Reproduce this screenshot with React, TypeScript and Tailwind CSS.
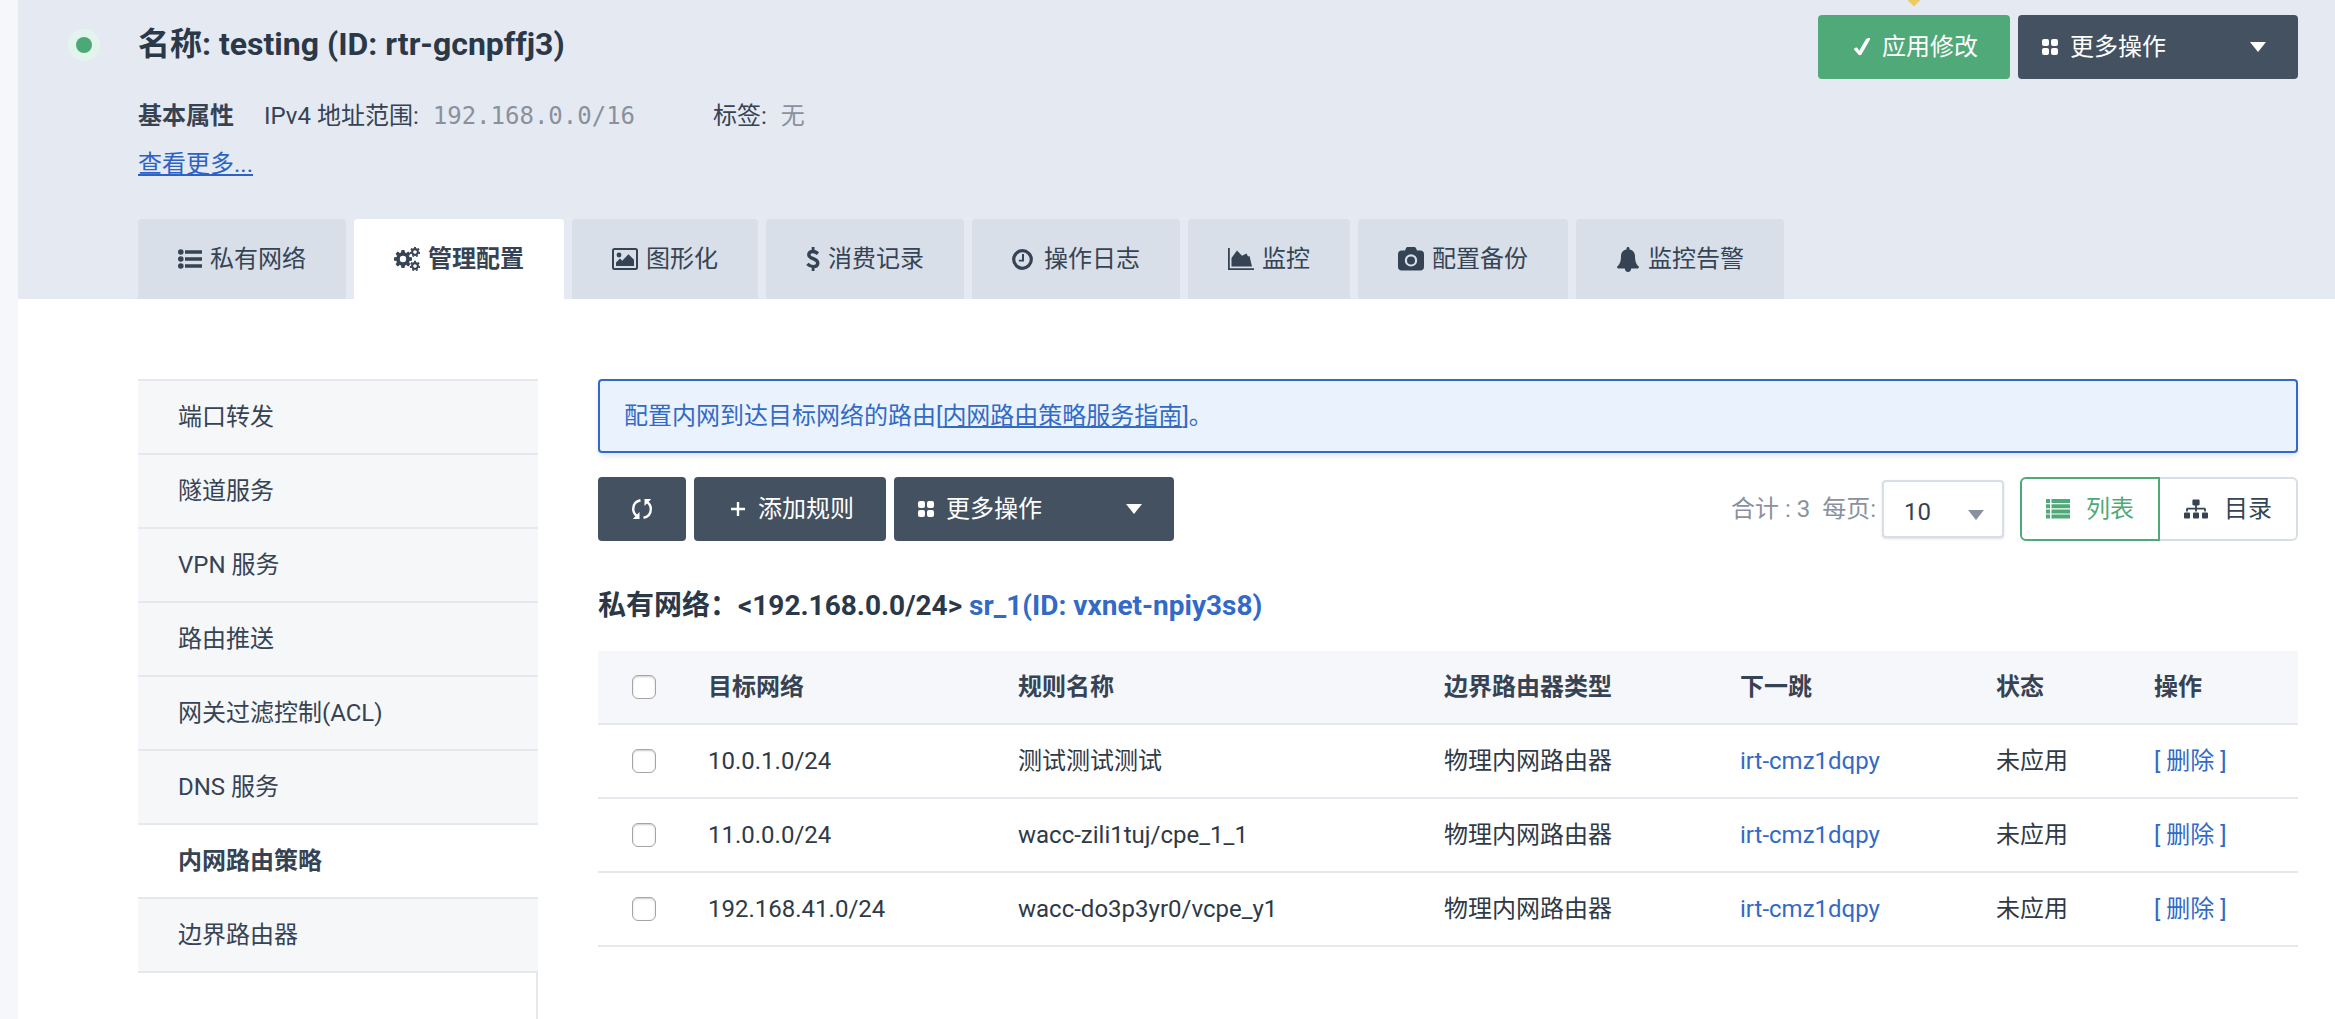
import type { ReactNode } from "react";
import { FaSitemap } from "react-icons/fa";

const icon = "shrink-0 fill-current";

function ListIcon() {
  return (
    <svg className={`${icon} h-5 w-6`} viewBox="0 0 24 20">
      <circle cx="2.8" cy="3" r="2.8" />
      <circle cx="2.8" cy="10" r="2.8" />
      <circle cx="2.8" cy="17" r="2.8" />
      <path d="M7 1.200h17v3.600H7zM7 8.200h17v3.600H7zM7 15.200h17v3.600H7z" />
    </svg>
  );
}

type GearProps = { cx: number; cy: number; r: number; hole: number; teeth: number };

function Gear({ cx, cy, r, hole, teeth }: GearProps) {
  return (
    <g transform={`translate(${cx} ${cy})`}>
      <circle r={(r * 0.75 + hole) / 2} fill="none" stroke="currentColor" strokeWidth={r * 0.75 - hole} />
      {Array.from({ length: teeth }, (_, i) => (
        <path
          key={i}
          transform={`rotate(${(360 / teeth) * i})`}
          d={`M${-r * 0.24} ${-r * 0.68}L${-r * 0.16} ${-r}H${r * 0.16}L${r * 0.24} ${-r * 0.68}z`}
        />
      ))}
    </g>
  );
}

function CogsIcon() {
  return (
    <svg className={`${icon} h-6 w-[26px]`} viewBox="0 0 26 24">
      <Gear cx={9} cy={12} r={9} hole={3.2} teeth={8} />
      <Gear cx={21} cy={5} r={5.2} hole={1.8} teeth={7} />
      <Gear cx={21} cy={19} r={5.2} hole={1.8} teeth={7} />
    </svg>
  );
}

function ImageIcon() {
  return (
    <svg className={`${icon} h-[22px] w-[26px]`} viewBox="0 0 26 22">
      <rect x="1" y="1" width="24" height="20" rx="1.5" fill="none" stroke="currentColor" strokeWidth="2" />
      <circle cx="7" cy="7" r="2.4" />
      <path d="M4 18v-3.500l4-4 2.200 2.200 6.300-6.400 5.500 5.500V18z" />
    </svg>
  );
}

function DollarIcon() {
  return (
    <svg className={`${icon} h-6 w-[14px]`} viewBox="0 0 14 24">
      <path
        fill="none"
        stroke="currentColor"
        strokeWidth="3.400"
        d="M12 6.600C10 5 8.500 4.500 6.700 4.500 4.300 4.500 2.800 5.800 2.800 7.700c0 4.600 9 3.300 9 8.300 0 2.200-1.800 3.600-4.400 3.600-2.400 0-4.300-1-6-2.700"
      />
      <path d="M5.700 0h2.800v4H5.700zM5.700 20h2.800v4H5.700z" />
    </svg>
  );
}

function ClockIcon() {
  return (
    <svg className={`${icon} h-[21px] w-6`} viewBox="0 0 24 21">
      <circle cx="10.500" cy="10.500" r="8.800" fill="none" stroke="currentColor" strokeWidth="3.200" />
      <path d="M10 5h2v7.500H6.800v-1.800H10z" />
    </svg>
  );
}

function AreaIcon() {
  return (
    <svg className={`${icon} h-[22px] w-[26px]`} viewBox="0 0 26 22">
      <path d="M0 0h1.800v20.200H26V22H0z" />
      <path d="M3.500 18.500V10L9 2.500l5 5.200 4.500-2.200 1.500 3 1.500-.5 2.500 10.500z" />
    </svg>
  );
}

function CameraIcon() {
  return (
    <svg className={`${icon} h-6 w-[26px]`} viewBox="0 0 26 24">
      <path
        fillRule="evenodd"
        d="M3.500 3.500H7L8 1.200C8.300.4 9 0 10 0h6c1 0 1.700.4 2 1.200l1 2.300h3.500C24.500 3.500 26 5 26 7v13c0 2-1.500 3.500-3.500 3.500h-19C1.500 23.500 0 22 0 20V7c0-2 1.500-3.500 3.500-3.500zM13 7.200a6.200 6.200 0 100 12.400 6.200 6.200 0 000-12.400z"
      />
      <circle cx="13" cy="13.400" r="4" />
    </svg>
  );
}

function BellIcon() {
  return (
    <svg className={`${icon} h-[25px] w-6`} viewBox="-1 0 24 25">
      <path d="M11 0c.9 0 1.500.7 1.500 1.500V2.400C16 3 18 5.800 18 9c0 6 1.500 8.500 4 10.800 0 1-.8 1.800-1.700 1.800H14.200C14.200 23.500 12.800 25 11 25s-3.200-1.500-3.200-3.400H1.700C.8 21.600 0 20.800 0 19.800 2.500 17.500 4 15 4 9c0-3.200 2-6 5.500-6.600v-.9C9.500.7 10.100 0 11 0z" />
    </svg>
  );
}

function CheckIcon() {
  return (
    <svg className={`${icon} h-[18px] w-4`} viewBox="0 0 16 18">
      <path d="M0 11.500c0-2.200 3-3 4-.8l1.200 2L11.800 1.500C12.800 0 14 0 16 0v1.500L7.600 16.200c-.8 1.400-2.600 1.400-3.400 0z" />
    </svg>
  );
}

function PlusIcon() {
  return (
    <svg className={`${icon} size-4`} viewBox="0 0 16 16">
      <path d="M6.800 1h2.400v5.800H15v2.400H9.200V15H6.800V9.200H1V6.800h5.800z" />
    </svg>
  );
}

function GridIcon() {
  return (
    <svg className={`${icon} size-4`} viewBox="0 0 16 16">
      <rect width="7" height="7" rx="2" />
      <rect x="9" width="7" height="7" rx="2" />
      <rect y="9" width="7" height="7" rx="2" />
      <rect x="9" y="9" width="7" height="7" rx="2" />
    </svg>
  );
}

function RefreshIcon() {
  return (
    <svg className={`${icon} h-5 w-[22px]`} viewBox="0 0 22 20">
      <path fill="none" stroke="currentColor" strokeWidth="2.400" d="M9.500 1.200C4.500 2.200 2.200 6 2.200 10c0 3 1.300 5.300 3.600 7M12.500 18.800C17.500 17.800 19.800 14 19.800 10c0-3-1.300-5.300-3.600-7" />
      <path d="M8.500 13V20H1.800zM13.500 7V0h6.700z" />
    </svg>
  );
}

function RowsIcon() {
  return (
    <svg className={`${icon} h-5 w-6`} viewBox="0 0 24 20">
      <path d="M0 0h4v4H0zM5.500 0H24v4H5.500zM0 5.200h4v4H0zM5.500 5.200H24v4H5.500zM0 10.400h4v4H0zM5.500 10.400H24v4H5.500zM0 15.600h4v4H0zM5.500 15.600H24v4H5.500z" />
    </svg>
  );
}

function Caret() {
  return (
    <svg className={`${icon} h-[10px] w-4`} viewBox="0 0 16 10">
      <path d="M0 0h16L8 10z" />
    </svg>
  );
}

function MoreButton() {
  return (
    <button className="flex h-16 w-[280px] items-center rounded bg-[#445161] pl-6 pr-8 text-white">
      <GridIcon />
      <span className="ml-3 flex-1 text-left">更多操作</span>
      <Caret />
    </button>
  );
}

const tabs: { label: string; icon: ReactNode; active?: boolean }[] = [
  { label: "私有网络", icon: <ListIcon /> },
  { label: "管理配置", icon: <CogsIcon />, active: true },
  { label: "图形化", icon: <ImageIcon /> },
  { label: "消费记录", icon: <DollarIcon /> },
  { label: "操作日志", icon: <ClockIcon /> },
  { label: "监控", icon: <AreaIcon /> },
  { label: "配置备份", icon: <CameraIcon /> },
  { label: "监控告警", icon: <BellIcon /> },
];

const menu = ["端口转发", "隧道服务", "VPN 服务", "路由推送", "网关过滤控制(ACL)", "DNS 服务", "内网路由策略", "边界路由器"];

const rules = [
  { network: "10.0.1.0/24", name: "测试测试测试" },
  { network: "11.0.0.0/24", name: "wacc-zili1tuj/cpe_1_1" },
  { network: "192.168.41.0/24", name: "wacc-do3p3yr0/vcpe_y1" },
];

const checkbox = "block size-6 appearance-none rounded-md border border-[#a5a5a5] bg-white shadow-[inset_0_1px_2px_#cccccc]";

export default function App() {
  return (
    <div className="flex min-h-screen bg-[#f5f7fa] pl-[18px] font-[Roboto,'Noto_Sans_CJK_SC',sans-serif] text-2xl leading-9 text-[#364354]">
      <div className="flex min-w-0 flex-1 flex-col bg-white">
        <header className="relative bg-[#e5eaf2] pl-[120px] pr-[37px]">
          <div className="absolute -top-2 right-[415px] size-3 rotate-45 bg-[#eccb62]" />
          <div className="flex h-[219px] justify-between">
            <div className="relative">
              <span className="absolute -left-[70px] top-[29px] flex size-8 items-center justify-center rounded-full bg-[#e3f4ec]">
                <span className="size-4 rounded-full bg-[#4ca877]" />
              </span>
              <h1 className="pt-6 text-[32px] font-bold leading-10 text-[#2b3847]">名称: testing (ID: rtr-gcnpffj3)</h1>
              <div className="mt-[34px] flex">
                <strong className="mr-[30px]">基本属性</strong>
                <span className="mr-[14px]">IPv4 地址范围:</span>
                <span className="mr-[78px] font-['DejaVu_Sans_Mono',monospace] text-[#8a919e]">192.168.0.0/16</span>
                <span className="mr-[14px]">标签:</span>
                <span className="text-[#8a919e]">无</span>
              </div>
              <a href="#more" className="mt-3 inline-block text-[#2b62c4] underline">查看更多...</a>
            </div>
            <div className="flex gap-2 pt-[15px]">
              <button className="flex h-16 w-48 items-center gap-3 rounded bg-[#4fa979] pl-9 text-white">
                <CheckIcon />
                应用修改
              </button>
              <MoreButton />
            </div>
          </div>
          <nav className="flex gap-2">
            {tabs.map((tab) => (
              <a
                key={tab.label}
                href="#tab"
                className={`flex h-20 items-center gap-2 rounded-t px-10 ${tab.active ? "bg-white font-bold" : "bg-[#d8dfe8]"}`}
              >
                {tab.icon}
                {tab.label}
              </a>
            ))}
          </nav>
        </header>

        <main className="flex flex-1 gap-[60px] pl-[120px] pr-[37px] pt-20">
          <aside className="flex w-[400px] shrink-0 flex-col">
            <ul className="border-t-2 border-[#e5e9ee]">
              {menu.map((item) => (
                <li key={item} className="border-b-2 border-[#e5e9ee]">
                  <a
                    href="#menu"
                    className={`flex h-[72px] items-center px-10 ${item === "内网路由策略" ? "font-bold" : "bg-[#f5f7f9]"}`}
                  >
                    {item}
                  </a>
                </li>
              ))}
            </ul>
            <div className="flex-1 border-r-2 border-[#e5e9ee]" />
          </aside>

          <section className="min-w-0 flex-1">
            <p className="flex h-[74px] items-center rounded border-2 border-[#326ac6] bg-[#eaf2fd] px-6 text-[#326ac6] shadow-md shadow-gray-200">
              配置内网到达目标网络的路由[<a href="#guide" className="underline">内网路由策略服务指南</a>]。
            </p>

            <div className="mt-6 flex items-center justify-between">
              <div className="flex gap-2">
                <button aria-label="刷新" className="flex h-16 w-[88px] items-center justify-center rounded bg-[#445161] text-white">
                  <RefreshIcon />
                </button>
                <button className="flex h-16 w-48 items-center gap-3 rounded bg-[#445161] pl-9 text-white">
                  <PlusIcon />
                  添加规则
                </button>
                <MoreButton />
              </div>
              <div className="flex items-center text-[#8a919e]">
                <span className="mr-3">合计 : 3</span>
                <label htmlFor="size" className="mr-1.5">每页:</label>
                <div className="relative mr-4">
                  <select id="size" className="block h-[58px] w-[122px] appearance-none rounded border-2 border-[#d8dee5] bg-white pl-5 pt-1.5 text-[#364354] shadow-sm">
                    <option>10</option>
                  </select>
                  <span className="pointer-events-none absolute right-5 top-[30px] flex">
                    <Caret />
                  </span>
                </div>
                <button className="flex h-16 w-[140px] items-center justify-center gap-4 rounded-l-md border-2 border-[#4fa979] text-[#4fa979]">
                  <RowsIcon />
                  列表
                </button>
                <button className="flex h-16 w-[138px] items-center justify-center gap-4 rounded-r-md border-2 border-l-0 border-[#d8dee5] text-[#364354]">
                  <FaSitemap className="size-6" />
                  目录
                </button>
              </div>
            </div>

            <h2 className="mt-11 text-[28px] font-bold leading-[42px] text-[#2b3847]">
              私有网络：&lt;192.168.0.0/24&gt; <a href="#vxnet" className="text-[#326ac6]">sr_1(ID: vxnet-npiy3s8)</a>
            </h2>

            <table className="mt-6 w-full table-fixed border-separate border-spacing-0 text-left [&_td]:border-b-2 [&_td]:border-[#e5e9ee] [&_th]:border-b-2 [&_th]:border-[#e5e9ee]">
              <colgroup>
                <col className="w-[110px]" />
                <col className="w-[310px]" />
                <col className="w-[426px]" />
                <col className="w-[296px]" />
                <col className="w-[256px]" />
                <col className="w-[158px]" />
                <col className="w-[144px]" />
              </colgroup>
              <thead>
                <tr className="h-[74px] bg-[#f5f7fa]">
                  <th className="pl-[34px]">
                    <input type="checkbox" aria-label="全选" className={checkbox} />
                  </th>
                  <th>目标网络</th>
                  <th>规则名称</th>
                  <th>边界路由器类型</th>
                  <th>下一跳</th>
                  <th>状态</th>
                  <th>操作</th>
                </tr>
              </thead>
              <tbody>
                {rules.map((rule) => (
                  <tr key={rule.network} className="h-[74px] text-[#2f3a47]">
                    <td className="pl-[34px]">
                      <input type="checkbox" aria-label={rule.network} className={checkbox} />
                    </td>
                    <td>{rule.network}</td>
                    <td>{rule.name}</td>
                    <td>物理内网路由器</td>
                    <td>
                      <a href="#router" className="text-[#326ac6]">irt-cmz1dqpy</a>
                    </td>
                    <td>未应用</td>
                    <td>
                      <a href="#delete" className="text-[#326ac6]">[ 删除 ]</a>
                    </td>
                  </tr>
                ))}
              </tbody>
            </table>
          </section>
        </main>
      </div>
    </div>
  );
}
